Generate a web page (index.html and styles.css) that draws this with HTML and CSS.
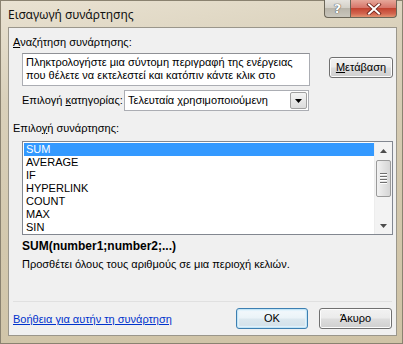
FILE: index.html
```html
<!DOCTYPE html>
<html>
<head>
<meta charset="utf-8">
<link rel="stylesheet" href="styles.css">
</head>
<body>
<div class="window">
  <div class="titlebar">
    <div class="title">Εισαγωγή συνάρτησης</div>
    <div class="caption-btns">
      <div class="cap help">?</div>
      <div class="cap close">
        <svg width="16" height="12" viewBox="0 0 16 12"><path d="M3 1.5 L13 10.5 M13 1.5 L3 10.5" stroke="#6a2016" stroke-width="3.6" stroke-linecap="square"/><path d="M3 1.5 L13 10.5 M13 1.5 L3 10.5" stroke="#ffffff" stroke-width="2" stroke-linecap="square"/></svg>
      </div>
    </div>
  </div>
  <div class="content">
    <div class="label first"><u>Α</u>ναζήτηση συνάρτησης:</div>
    <div class="search-row">
      <div class="searchbox">Πληκτρολογήστε μια σύντομη περιγραφή της ενέργειας<br>που θέλετε να εκτελεστεί και κατόπιν κάντε κλικ στο</div>
      <div class="btn go"><u>Μ</u>ετάβαση</div>
    </div>
    <div class="cat-row">
      <div class="cat-label">Επιλογή <u>κ</u>ατηγορίας:</div>
      <div class="select">
        <span class="select-text">Τελευταία χρησιμοποιούμενη</span>
        <span class="select-arrow"><svg width="7" height="4" viewBox="0 0 7 4"><path d="M0 0 H7 L3.5 4 Z" fill="#000"/></svg></span>
      </div>
    </div>
    <div class="label second">Επιλο<u>γ</u>ή συνάρτησης:</div>
    <div class="listbox">
      <div class="items">
        <div class="item sel">SUM</div>
        <div class="item">AVERAGE</div>
        <div class="item">IF</div>
        <div class="item">HYPERLINK</div>
        <div class="item">COUNT</div>
        <div class="item">MAX</div>
        <div class="item">SIN</div>
      </div>
      <div class="scrollbar">
        <div class="arrow up"><svg width="7" height="4" viewBox="0 0 7 4"><path d="M0 4 H7 L3.5 0 Z" fill="#4d4d4d"/></svg></div>
        <div class="track">
          <div class="thumb"><span class="grip"></span><span class="grip"></span><span class="grip"></span><span class="grip"></span></div>
        </div>
        <div class="arrow down"><svg width="7" height="4" viewBox="0 0 7 4"><path d="M0 0 H7 L3.5 4 Z" fill="#4d4d4d"/></svg></div>
      </div>
    </div>
    <div class="syntax">SUM(number1;number2;...)</div>
    <div class="desc">Προσθέτει όλους τους αριθμούς σε μια περιοχή κελιών.</div>
    <div class="separator"></div>
    <div class="footer">
      <a class="help-link" href="#">Βοήθεια για αυτήν τη συνάρτηση</a>
      <div class="btn ok">OK</div>
      <div class="btn cancel">Άκυρο</div>
    </div>
  </div>
</div>
</body>
</html>
```
FILE: styles.css
```css
html, body {
  margin: 0;
  padding: 0;
}
body {
  width: 403px;
  height: 344px;
  overflow: hidden;
  font-family: "Liberation Sans", Arial, sans-serif;
  font-size: 11px;
  color: #000;
}
.window {
  width: 403px;
  height: 344px;
  box-sizing: border-box;
  background: linear-gradient(170deg, #e9e2d2 0%, #d9d0ba 25%, #d3c8ad 60%, #cfc3a6 100%);
  border: 1px solid #8a8270;
  display: flex;
  flex-direction: column;
}
.titlebar {
  height: 26px;
  display: flex;
  justify-content: space-between;
  align-items: flex-start;
  flex: none;
}
.title {
  font-family: "Noto Sans", "Open Sans", sans-serif;
  font-size: 12px;
  line-height: 16px;
  padding: 6px 0 0 7px;
  color: #111;
}
.caption-btns {
  display: flex;
  margin-right: 5px;
  margin-top: -1px;
}
.cap {
  height: 18px;
  box-sizing: border-box;
  display: flex;
  align-items: center;
  justify-content: center;
  border: 1px solid #6b6658;
  border-top: none;
}
.help {
  width: 26px;
  border-bottom-left-radius: 4px;
  background: linear-gradient(#e6e4de 0%, #d4d1c8 45%, #b9b5aa 50%, #c9c6bc 100%);
  font-family: "DejaVu Sans", sans-serif;
  font-size: 13px;
  font-weight: bold;
  color: #ffffff;
  text-shadow: 0 0 1px #444, 0 0 1px #444;
  border-right: none;
}
.close {
  width: 47px;
  border-bottom-right-radius: 4px;
  background: linear-gradient(#e6a89a 0%, #d7766a 45%, #c24431 50%, #d2654f 80%, #e29572 100%);
}
.content {
  margin: 0 5px 7px 7px;
  flex: 1;
  background: #f0f0f0;
  border: 1px solid #9a968b;
  display: flex;
  flex-direction: column;
  line-height: 13px;
}
.label {
  padding-left: 4px;
}
.label.first {
  margin-top: 8px;
}
.search-row {
  display: flex;
  align-items: flex-start;
  margin-top: 4px;
  margin-left: 13px;
}
.searchbox {
  width: 288px;
  height: 33px;
  box-sizing: border-box;
  background: #fff;
  border: 1px solid #abadb3;
  border-top-color: #8f9196;
  padding: 2px 0 0 3px;
  white-space: nowrap;
  overflow: hidden;
}
.btn {
  height: 21px;
  box-sizing: border-box;
  border: 1px solid #707070;
  border-radius: 3px;
  background: linear-gradient(#f2f2f2 0%, #ebebeb 48%, #dddddd 52%, #cfcfcf 100%);
  box-shadow: inset 0 0 0 1px #fcfcfc;
  display: flex;
  align-items: center;
  justify-content: center;
}
.btn.go {
  width: 64px;
  margin-left: 19px;
  margin-top: 4px;
}
.cat-row {
  display: flex;
  align-items: center;
  margin-top: 4px;
  margin-left: 13px;
}
.cat-label {
  width: 102px;
}
.select {
  width: 185px;
  height: 21px;
  box-sizing: border-box;
  background: #fff;
  border: 1px solid #abadb3;
  display: flex;
  align-items: center;
  justify-content: space-between;
}
.select-text {
  padding-left: 3px;
}
.select-arrow {
  width: 17px;
  height: 17px;
  margin-right: 1px;
  box-sizing: border-box;
  border: 1px solid #a0a0a0;
  border-radius: 2px;
  background: linear-gradient(#f4f4f4, #dcdcdc);
  display: flex;
  align-items: center;
  justify-content: center;
}
.label.second {
  margin-top: 11px;
}
.listbox {
  margin-top: 6px;
  margin-left: 13px;
  width: 371px;
  height: 94px;
  box-sizing: border-box;
  border: 1px solid #828790;
  background: #fff;
  display: flex;
}
.items {
  flex: 1;
  padding: 1px 0 0 1px;
}
.item {
  height: 13px;
  line-height: 13px;
  padding-left: 2px;
}
.item.sel {
  background: #3399ff;
  color: #fff;
}
.scrollbar {
  width: 17px;
  display: flex;
  flex-direction: column;
  background: #f3f3f3;
  border-left: 1px solid #ededed;
}
.arrow {
  height: 17px;
  display: flex;
  align-items: center;
  justify-content: center;
}
.track {
  flex: 1;
  padding: 1px 1px;
}
.thumb {
  height: 37px;
  box-sizing: border-box;
  border: 1px solid #9a9a9a;
  border-radius: 2px;
  background: linear-gradient(90deg, #f2f2f2, #e3e3e3 50%, #d6d6d6);
  display: flex;
  flex-direction: column;
  align-items: center;
  justify-content: center;
  gap: 1px;
}
.grip {
  width: 7px;
  height: 1px;
  background: #6f6f6f;
  border-bottom: 1px solid #fff;
}
.syntax {
  margin-top: 5px;
  margin-left: 13px;
  font-family: "Liberation Sans", Arial, sans-serif;
  font-weight: bold;
  font-size: 12px;
}
.desc {
  margin-top: 5px;
  margin-left: 13px;
}
.separator {
  margin-top: 30px;
  margin-left: 4px;
  margin-right: 4px;
  height: 1px;
  background: #e0e0e0;
}
.footer {
  display: flex;
  align-items: center;
  margin-top: 6px;
  padding-left: 4px;
}
.help-link {
  color: #0033cc;
  text-decoration: underline;
  flex: 1;
  margin-top: 2px;
}
.btn.ok {
  width: 72px;
  border-color: #3c7fb1;
  box-shadow: inset 0 0 0 1px #c4e5f6, inset 0 0 1px 2px #e2f2fb;
  background: linear-gradient(#f4f9fc 0%, #eaf3f8 48%, #dce8ef 52%, #d2e0e8 100%);
}
.btn.cancel {
  width: 73px;
  margin-left: 11px;
  margin-right: 4px;
}
```
